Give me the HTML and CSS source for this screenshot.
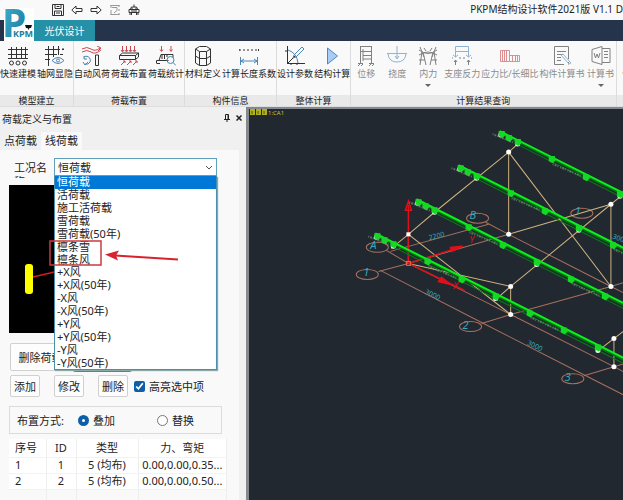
FILE: index.html
```html
<!DOCTYPE html>
<html lang="zh-CN">
<head>
  <meta charset="utf-8">
  <title>PKPM结构设计软件2021版 V1.1</title>
  <link rel="stylesheet" href="styles.css">
</head>
<body>
  <header class="top">
    <svg class="logo" width="30" height="33" viewBox="0 0 30 33">
      <defs>
        <linearGradient id="logoFill" x1="0" y1="0" x2="1" y2="1">
          <stop offset="0" stop-color="#43b9d2"/>
          <stop offset="1" stop-color="#156f96"/>
        </linearGradient>
      </defs>
      <rect width="30" height="33" fill="#fff"/>
      <text x="-2" y="29" font-size="39" font-weight="700" fill="url(#logoFill)">P</text>
      <rect x="9" y="21" width="21" height="9" fill="#fff"/>
      <text x="9" y="29" font-size="9" font-weight="700" fill="#1b7f9e">KPM</text>
      <path d="M21 17h7l-1 3h-1.500l-1 2-1-2H22z" fill="#111"/>
    </svg>
    <div class="titlebar">
      <div class="quick">
        <button class="quick-btn" aria-label="保存"><svg width="12" height="12" viewBox="0 0 12 12"><path d="M.5.5h11v11H.5zM3 .5v4h6v-4M2.500 11.500V7h7v4.500M4 9h4M4.500 2.500h3"/></svg></button>
        <button class="quick-btn" aria-label="撤销"><svg width="12" height="12" viewBox="0 0 12 12"><path d="M.8 6 5 2v2.500h6v3H5V10z"/></svg></button>
        <button class="quick-btn" aria-label="重做"><svg width="12" height="12" viewBox="0 0 12 12"><path d="M11.200 6 7 2v2.500H1v3h6V10z"/></svg></button>
        <button class="quick-btn dim" aria-label="选择"><svg width="12" height="12" viewBox="0 0 12 12"><path d="M1.500 1.500h9M1.500 10.500h9M2 1v3M2 6v5M10 1v2M10 5v2M10 9v2M3 3.500h5v3l-3 2.500"/></svg></button>
        <button class="quick-btn" aria-label="模型"><svg width="12" height="12" viewBox="0 0 12 12"><path d="M1 5.500h10v3H1zM2.500 5l1-2h5l1 2M6 .5V3M2 8.500V11M10 8.500V11M3.500 11V9M8.500 11V9M3 7h6M4 3.500v1.500M8 3.500v1.500"/></svg></button>
      </div>
      <h1 class="app-title">PKPM结构设计软件2021版 V1.1 D</h1>
    </div>
    <nav class="navbar">
      <button class="nav-tab">光伏设计</button>
    </nav>
  </header>

  <section class="ribbon">
    <div class="group">
      <div class="group-items">
        <button class="tool">
          <svg width="20" height="20" viewBox="0 0 20 20"><path class="k" d="M3.500 1v12M8.500 1v12M13.500 1v12M17.500 1v12M0 3.500h20M0 8.500h20M0 12.500h20"/><g class="k"><circle cx="3.500" cy="17" r="2"/><circle cx="10" cy="17" r="2"/><circle cx="16.500" cy="17" r="2"/></g></svg>
          快速建模
        </button>
        <button class="tool">
          <svg width="20" height="20" viewBox="0 0 20 20"><path class="k" d="M3.500 0v20M8.500 0v11M13.500 0v9M18 2v2M0 3.500h15M0 8.500h12M0 13.500h5M15 8.500h3M17 3.500h2"/><path class="b" d="M7 14.500q6-6 12 0q-6 6-12 0z"/><circle class="b" cx="13" cy="14.500" r="1.500"/></svg>
          轴网显隐
        </button>
      </div>
      <div class="group-name">模型建立</div>
    </div>

    <div class="group">
      <div class="group-items">
        <button class="tool">
          <svg width="20" height="20" viewBox="0 0 20 20"><path class="r" d="M0 3q5-3 9 0t9-1M0 6q5-3 9 0t10-2M15 0l4 2-3 3"/><path class="k" d="M13.500 9v10.500h3V9z"/><path class="b" d="M2 11a4 4 0 1 1 1 7M1 16l2 3 3-3M2 10v3h3"/></svg>
          自动风荷
        </button>
        <button class="tool">
          <svg width="20" height="20" viewBox="0 0 20 20"><path class="r" d="M3.500 0v5M7.500 0v5M11.500 0v5M15.500 0v5M2 4l1.500 2L5 4M6 4l1.500 2L9 4M10 4l1.500 2L13 4M14 4l1.500 2L17 4M2 19l4-4M8 19l4-4M14 19l4-4M4 15h2v2M10 15h2v2M16 15h2v2"/><path class="k" d="M.5 9.500l3-2.500h16v4l-3 2.500H.5zM.5 9.500h16v4M16.500 9.500l3-2.500"/></svg>
          荷载布置
        </button>
        <button class="tool">
          <svg width="20" height="20" viewBox="0 0 20 20"><path class="r" d="M5.500 0v5M15 0v5M4 3.500l1.500 2L7 3.500M13.500 3.500l1.500 2 1.500-2"/><path class="k" d="M.5 17.500v-3h12M3 14.500l2-6h12v3M6 9v4M8.500 9v4M11 9v2M1 17.500h3"/><circle class="b" cx="14.500" cy="14" r="3.500"/><path class="b" d="M17 16.500l3 3"/></svg>
          荷载统计
        </button>
      </div>
      <div class="group-name">荷载布置</div>
    </div>

    <div class="group">
      <div class="group-items">
        <button class="tool">
          <svg width="20" height="20" viewBox="0 0 20 20"><path class="k" d="M2.500 3l4-2.500h7l4 2.500v14l-4 2.500h-7l-4-2.500zM2.500 3l4 2.500h7l4-2.500M6.500 5.500v14M13.500 5.500v14M2.500 10l4 2.500h7l4-2.500"/></svg>
          材料定义
        </button>
        <button class="tool">
          <svg width="20" height="20" viewBox="0 0 20 20"><path class="k" stroke-dasharray="2 2" d="M0 4h20"/><path class="k" d="M0 3v2M19.500 3v2"/><path class="b" d="M1.500 11v8M18.500 11v8M2 15h16M5 13l-3 2 3 2M15 13l3 2-3 2"/></svg>
          计算长度系数
        </button>
      </div>
      <div class="group-name">构件信息</div>
    </div>

    <div class="group">
      <div class="group-items">
        <button class="tool">
          <svg width="20" height="20" viewBox="0 0 20 20"><path class="k" d="M2.500 0v17.500H20M2 18L10 10M0 5h2M6 17v2M12 17v2"/><path class="b" d="M3 4q9 3 10 13M9 9l8-8 2 2-8 8-3 1z"/></svg>
          设计参数
        </button>
        <button class="tool">
          <svg width="20" height="20" viewBox="0 0 20 20"><path class="play" d="M5.500 2v16l10-8z"/></svg>
          结构计算
        </button>
      </div>
      <div class="group-name">整体计算</div>
    </div>

    <div class="group disabled">
      <div class="group-items">
        <button class="tool" disabled>
          <svg width="20" height="20" viewBox="0 0 20 20"><path class="k" d="M4.500 0v17M15.500 0v17M4 .5h12M4 5.500h12M7 3v12M7 9.500h8M7 13h8M2 17.500h5M13 17.500h5M2 20l2-2M13 20l2-2M5 20l2-2M16 20l2-2"/></svg>
          位移
        </button>
        <button class="tool" disabled>
          <svg width="20" height="20" viewBox="0 0 20 20"><path class="b" d="M0 7.500h20M1 8q1 8 9 8t9-8M10 0v12M8 10l2 3 2-3"/></svg>
          挠度
        </button>
        <button class="tool" disabled>
          <svg width="20" height="20" viewBox="0 0 20 20"><path class="k" d="M1 4q9 7 18 0M1 9q9-6 18 0M4 6L2 19M5 6l3 13M16 6l2 13M15 6l-3 13M2 1l4 10M18 1l-4 10M6 2l2 3M14 2l-2 3M1 14h6M13 14h6"/></svg>
          内力
          <span class="drop"></span>
        </button>
        <button class="tool" disabled>
          <svg width="20" height="20" viewBox="0 0 20 20"><path class="b" d="M3.500 9V.5h13V9M3.500 5.500h13M1 9l2.500 2L6 9M14 9l2.500 2L19 9M3.500 7v4M16.500 7v4"/><path class="k" d="M3.500 19v-5M16.500 19v-5M2 16l1.500-2L5 16M15 16l1.500-2 1.500 2M0 11v2M8 11v2M12 11v2M20 11v2"/></svg>
          支座反力
        </button>
        <button class="tool" disabled>
          <svg width="20" height="20" viewBox="0 0 20 20"><path class="r" d="M.5 4.500h9v11h-9zM9.500 9.500h10v6h-10M2.500 4v11M4.500 4v11M6.500 4v11M12.500 10v5M15.500 10v5M17.500 10v5"/></svg>
          应力比/长细比
        </button>
        <button class="tool" disabled>
          <svg width="20" height="20" viewBox="0 0 20 20"><path class="k" d="M12 18.500H2.500V.5h14V13M5 5.500h9M5 8.500h6M5 11.500h4M5 14.500h4M16.500 16v2.500"/><path class="b" d="M9 9l8 9 2-1-8-9z"/></svg>
          构件计算书
        </button>
        <button class="tool" disabled>
          <svg width="20" height="20" viewBox="0 0 20 20"><path class="k" d="M1 3.500l10-3v18l-10-3zM11 2.500h8v14h-8M13 5.500h4M13 8.500h4M13 11.500h4M3 7l1.500 5L6 8l1.500 4L9 7"/></svg>
          计算书
          <span class="drop"></span>
        </button>
      </div>
      <div class="group-name">计算结果查询</div>
    </div>

    <div class="group disabled rest">
      <div class="group-items">
        <button class="tool" disabled><svg width="20" height="20" viewBox="0 0 20 20"></svg>优</button>
      </div>
      <div class="group-name"></div>
    </div>
  </section>

  <main class="work">
    <aside class="panel">
      <div class="panel-head">
        <h2 class="panel-title">荷载定义与布置</h2>
        <button class="head-btn" aria-label="固定"><svg width="6" height="8" viewBox="0 0 6 8"><path d="M1.500.5h3V5M1.500.5V5M0 5.500h6M3 5.500V8M4 1v4"/></svg></button>
        <button class="head-btn" aria-label="关闭"><svg width="6" height="6" viewBox="0 0 6 6"><path d="M.5.5l5 5M5.500.5l-5 5" stroke-width="1.500"/></svg></button>
      </div>
      <div class="tabs">
        <button class="tab">点荷载</button>
        <button class="tab active">线荷载</button>
      </div>

      <div class="page">
        <div class="field">
          <label class="case-label" for="loadCase">工况名称</label>
          <div class="combo">
            <select class="case-select" id="loadCase">
              <option>恒荷载</option>
            </select>
            <svg class="chevron" width="8" height="6" viewBox="0 0 8 6"><path d="M1 1l3 3 3-3" fill="none" stroke="#555"/></svg>
            <ul class="case-list" role="listbox" aria-label="工况">
              <li class="selected" role="option">恒荷载</li>
              <li role="option">活荷载</li>
              <li role="option">施工活荷载</li>
              <li role="option">雪荷载</li>
              <li role="option">雪荷载(50年)</li>
              <li role="option">檩条雪</li>
              <li role="option">檩条风</li>
              <li role="option">+X风</li>
              <li role="option">+X风(50年)</li>
              <li role="option">-X风</li>
              <li role="option">-X风(50年)</li>
              <li role="option">+Y风</li>
              <li role="option">+Y风(50年)</li>
              <li role="option">-Y风</li>
              <li role="option">-Y风(50年)</li>
            </ul>
            <svg class="note" width="132" height="28" viewBox="0 0 132 28">
              <rect x="1" y="2" width="51" height="24" fill="none" stroke="#c93a40" stroke-width="1.500"/>
              <path d="M129 20.500L66 16.500" stroke="#d8232f" stroke-width="2"/>
              <path d="M56 15.500l14-4-3 5 2 5z" fill="#d8232f"/>
            </svg>
          </div>
        </div>

        <svg class="preview" width="196" height="148" viewBox="0 0 196 148">
          <rect width="196" height="148" fill="#000"/>
          <path d="M24 92l30-7" stroke="#d02020" stroke-width="1.500"/>
          <rect x="16" y="79" width="8" height="30" rx="3" fill="#ffff00"/>
        </svg>

        <div class="row large">
          <button class="btn wide">删除荷载</button>
          <button class="btn focus" aria-label="布置荷载"></button>
        </div>
        <div class="row edit">
          <button class="btn">添加</button>
          <button class="btn">修改</button>
          <div class="pair">
            <button class="btn">删除</button>
            <label class="check"><input type="checkbox" checked>高亮选中项</label>
          </div>
        </div>

        <div class="mode">
          <span class="mode-name">布置方式:</span>
          <label class="radio"><input type="radio" name="mode" checked>叠加</label>
          <label class="radio"><input type="radio" name="mode">替换</label>
        </div>

        <table class="loads">
          <thead>
            <tr><th class="c-no">序号</th><th class="c-id">ID</th><th class="c-type">类型</th><th>力、弯矩</th></tr>
          </thead>
          <tbody>
            <tr><td>1</td><td>1</td><td>5 (均布)</td><td>0.00,0.00,0.35...</td></tr>
            <tr><td>2</td><td>2</td><td>5 (均布)</td><td>0.00,0.00,0.50...</td></tr>
            <tr class="empty"><td></td><td></td><td></td><td></td></tr>
          </tbody>
        </table>
      </div>
    </aside>

    <section class="view">
      <svg class="scene" viewBox="249 110 374 390" preserveAspectRatio="xMinYMin slice">
        <defs>
          <path id="knob" d="M-3-2h6l1 4-3 3-4-2z"/>
          <g id="beam">
            <path d="M18 13.500L250 131" stroke="#087a16"/>
            <path d="M2 2.500L250 127.500" stroke="#067012" stroke-width="2"/>
            <g fill="#f4f4f4">
              <circle cx="1" cy="4" r="2.500"/><circle cx="18" cy="13" r="2.500"/><circle cx="120" cy="65" r="2.500"/><circle cx="222" cy="117" r="2.500"/>
            </g>
            <path d="M0 0L250 125.500" stroke="#0cf01c" stroke-width="2"/>
            <g fill="#14d824">
              <use href="#knob" x="2" y="2"/><use href="#knob" x="9" y="6"/><use href="#knob" x="18" y="10"/>
              <use href="#knob" x="52" y="27"/><use href="#knob" x="86" y="45"/><use href="#knob" x="120" y="62"/>
              <use href="#knob" x="154" y="79"/><use href="#knob" x="188" y="96"/><use href="#knob" x="222" y="113"/>
            </g>
            <g stroke="#8b9490" stroke-width="2" stroke-dasharray="1 1 2 1 1 2" opacity=".6">
              <path d="M-7 3l22 9M53 33l29 12M155 84l29 13"/>
            </g>
          </g>
        </defs>

        <g class="grid">
          <path d="M378 272L408 264L508 235M386 251L408 264L510 315L613 367L630 376"/>
          <path d="M390 252L488 225M485 223L508 235L610 287L630 297"/>
          <path d="M380 271L481 323L583 375L630 399"/>
          <path d="M481 324L510 315L610 287L630 281M583 376L613 367L630 362M558 217L630 254"/>
          <ellipse cx="377" cy="248" rx="11" ry="5"/>
          <ellipse cx="367" cy="275" rx="11" ry="5"/>
          <ellipse cx="477" cy="219" rx="11" ry="5"/>
          <ellipse cx="470" cy="327" rx="11" ry="5"/>
          <ellipse cx="572" cy="379" rx="11" ry="5"/>
          <ellipse cx="581" cy="214" rx="11" ry="5"/>
        </g>

        <g class="frame">
          <path d="M508 235V153L610 287V205L508 235M518 144L508 153L434 213L408 235L391 249"/>
          <path d="M620 197L610 205L510 287L494 301M408 264V235L510 315V287L408 264"/>
          <path d="M596 352L613 339V367M613 339L630 326"/>
        </g>

        <g class="axes">
          <path d="M408 264V206M408 264L464 291M408 264L462 247"/>
          <path d="M408 202l-3 9h6z" fill="none"/>
          <path d="M450 285l-12-3 3-4zM462 247l-11 5-1-4z" fill="#e01018"/>
        </g>

        <use href="#beam" x="499" y="132"/>
        <use href="#beam" x="458" y="166"/>
        <use href="#beam" x="416" y="200"/>
        <use href="#beam" x="375" y="234"/>

        <g fill="#fff">
          <circle cx="508" cy="153" r="2.500"/><circle cx="508" cy="235" r="2.500"/>
          <circle cx="610" cy="205" r="2.500"/><circle cx="610" cy="287" r="2.500"/>
          <circle cx="510" cy="287" r="2.500"/><circle cx="510" cy="315" r="2.500"/>
          <circle cx="613" cy="339" r="2.500"/><circle cx="613" cy="367" r="2.500"/>
          <rect x="406" y="233" width="4" height="4"/>
        </g>
        <rect x="406" y="262" width="4" height="4" fill="none" stroke="#f06050"/>

        <g class="dims">
          <text transform="translate(429 241) rotate(-15)">2200</text>
          <text transform="translate(424 294) rotate(25)">3000</text>
          <text transform="translate(526 345) rotate(25)">3000</text>
          <text transform="translate(611 239) rotate(20)">3000</text>
        </g>
        <g class="marks">
          <text x="370" y="250">A</text>
          <text x="363" y="277">1</text>
          <text x="469" y="220">B</text>
          <text x="462" y="329">2</text>
          <text x="564" y="381">3</text>
          <text x="574" y="216">1</text>
        </g>
        <g class="axis-names">
          <text x="453" y="290">X</text>
          <text x="469" y="244">Y</text>
        </g>
        <g fill="#c8c820">
          <path d="M250 110h5v6h-5zM256 110h5v6h-5zM262 110h5v6h-5z" opacity=".85"/>
          <path d="M252 112v3M258 112v3M264 112v3" stroke="#555a18"/>
          <text x="268" y="116" font-size="6">1:CA1</text>
        </g>
      </svg>
    </section>
  </main>
</body>
</html>
```

FILE: styles.css
```css
* {
  margin: 0;
  padding: 0;
  box-sizing: border-box;
}

body {
  min-height: 100vh;
  display: flex;
  flex-direction: column;
  background: #f9f9f9;
  color: #222;
  font-family: "Noto Sans", "Noto Sans CJK SC", sans-serif;
  font-size: 11px;
  overflow: hidden;
}

button,
select,
input {
  font: inherit;
  color: inherit;
}

button {
  border: none;
  background: none;
}

svg {
  display: block;
}

/* title bar and main tabs */
.top {
  position: relative;
}

.logo {
  position: absolute;
  left: 4px;
  top: 8px;
}

.titlebar {
  height: 20px;
  padding-left: 52px;
  display: flex;
  align-items: center;
  justify-content: space-between;
  overflow: hidden;
}

.quick {
  display: flex;
  gap: 7px;
}

.quick-btn path {
  fill: none;
  stroke: #333;
}

.quick-btn.dim path {
  stroke: #999;
}

.app-title {
  font-size: 10px;
  font-weight: 400;
  line-height: 14px;
  padding-bottom: 2px;
  white-space: nowrap;
}

.navbar {
  height: 21px;
  padding-left: 34px;
  background: #26344b;
  display: flex;
}

.nav-tab {
  width: 61px;
  background: #2590a6;
  color: #fff;
  font-size: 10px;
}

/* ribbon */
.ribbon {
  display: flex;
  height: 66px;
  border-bottom: 1px solid #ddd;
  font-size: 9px;
  overflow: hidden;
}

.group {
  flex: none;
  display: flex;
  flex-direction: column;
  border-right: 1px solid #dcdcdc;
}

.group.rest {
  flex: 1;
  border-right: none;
}

.group-items {
  flex: 1;
  display: flex;
  gap: 1px;
  padding-top: 5px;
}

.tool {
  min-width: 30px;
  display: flex;
  flex-direction: column;
  align-items: center;
  white-space: nowrap;
  line-height: 16px;
}

.rest .tool {
  min-width: 0;
}

.tool path,
.tool circle {
  fill: none;
}

.k {
  stroke: #333;
}

.b {
  stroke: #4a86b8;
}

.r {
  stroke: #cc4850;
}

.tool .play {
  fill: #a9cdf5;
  stroke: #4a86c8;
}

.disabled .tool {
  color: #8c8c8c;
}

.disabled svg {
  opacity: 0.6;
}

.drop {
  border: 3px solid transparent;
  border-top-color: #666;
  margin-top: 2px;
}

.group-name {
  height: 11px;
  line-height: 11px;
  background: #e9e9e9;
  text-align: center;
}

/* work area */
.work {
  flex: 1;
  display: flex;
  min-height: 0;
}

.panel {
  width: 246px;
  flex: none;
  background: #f0f0f0;
  padding-right: 7px;
}

.panel-head {
  height: 22px;
  display: flex;
  align-items: center;
  gap: 6px;
  padding-left: 2px;
  margin-right: -3px;
}

.panel-title {
  flex: 1;
  font-size: 10px;
  font-weight: 400;
}

.head-btn path {
  fill: none;
  stroke: #222;
}

.tabs {
  display: flex;
  align-items: flex-end;
  height: 21px;
}

.tab {
  height: 18px;
  padding: 0 4px;
  line-height: 18px;
}

.tab.active {
  background: #f9f9f9;
}

.page {
  height: 350px;
  background: #f9f9f9;
  padding: 8px 12px 0 9px;
}

.field {
  display: flex;
  padding: 0 10px 0 5px;
}

.case-label {
  width: 40px;
  height: 20px;
  padding: 3px 6px 0 0;
  line-height: 14px;
  overflow: hidden;
}

.combo {
  position: relative;
  flex: 1;
}

.case-select {
  display: block;
  appearance: none;
  width: 100%;
  height: 18px;
  padding: 0 3px;
  background: #fff;
  border: 1px solid #5fa0bf;
}

.chevron {
  position: absolute;
  right: 4px;
  top: 7px;
}

.case-list {
  position: absolute;
  z-index: 2;
  left: 0;
  top: 18px;
  width: 100%;
  height: 194px;
  display: grid;
  grid-auto-rows: 1fr;
  background: #fff;
  border: 1px solid #4a8fae;
  border-top: none;
  box-shadow: 1px 1px 1px #8aa;
  list-style: none;
}

.case-list li {
  display: flex;
  align-items: center;
  min-height: 0;
  line-height: 12px;
  padding-left: 2px;
}

.case-list .selected {
  background: #0078d7;
  color: #fff;
}

.note {
  position: absolute;
  z-index: 3;
  left: -5px;
  top: 81px;
}

.preview {
  margin-top: 7px;
}

.row {
  display: flex;
}

.row.large {
  margin-top: 10px;
  height: 28px;
}

.row.edit {
  margin: 4px 0 9px;
  height: 22px;
  gap: 13px;
}

.btn {
  min-width: 30px;
  margin-left: 1px;
  background: #fdfdfd;
  border: 1px solid #d0d0d0;
  border-radius: 2px;
}

.btn.wide,
.btn.focus {
  width: 61px;
}

.btn.focus {
  border: 2px solid #3b80aa;
  border-radius: 4px;
  height: 29px;
}

.pair {
  display: flex;
  gap: 6px;
}

.check,
.radio {
  display: flex;
  align-items: center;
  gap: 4px;
  white-space: nowrap;
}

.check input,
.radio input {
  width: 11px;
  height: 11px;
  accent-color: #0f5ea8;
}

.mode {
  height: 28px;
  margin-right: 5px;
  padding-left: 7px;
  display: flex;
  align-items: center;
  gap: 14px;
  border: 1px solid #dcdcdc;
}

.radio input {
  appearance: none;
  border: 1px solid #777;
  border-radius: 50%;
  background: #fff;
}

.radio input:checked {
  border: 4px solid #0f5ea8;
}

.radio + .radio {
  margin-left: 28px;
}

.loads {
  width: 100%;
  margin-top: 5px;
  table-layout: fixed;
  border-collapse: collapse;
}

.loads th,
.loads td {
  height: 16px;
  line-height: 14px;
  font-weight: 400;
  text-align: center;
  white-space: nowrap;
  background: #fff;
  border-right: 1px solid #eee;
  border-bottom: 1px solid #f2f2f2;
}

.loads th {
  height: 18px;
}

.loads th:first-child,
.loads td:first-child {
  text-align: left;
  padding-left: 6px;
}

.loads .empty td {
  background: #f9f9f9;
}

.c-no {
  width: 37px;
}

.c-id {
  width: 30px;
}

.c-type {
  width: 62px;
}

/* model view */
.view {
  flex: 1;
  min-width: 0;
  background: #212830;
  border-left: 3px solid #85888c;
  border-top: 2px solid #85888c;
  position: relative;
}

.scene {
  position: absolute;
  width: 100%;
  height: 100%;
}

.grid {
  fill: none;
  stroke: #a8705f;
}

.frame {
  fill: none;
  stroke: #cdb27c;
}

.axes {
  stroke: #e01018;
  stroke-width: 1.5px;
}

.dims text {
  font-size: 7px;
  fill: #35aab5;
}

.marks text {
  font-size: 11px;
  font-style: italic;
  fill: #35aab5;
}

.axis-names text {
  font-size: 9px;
  font-style: italic;
  fill: #e01018;
}
```
